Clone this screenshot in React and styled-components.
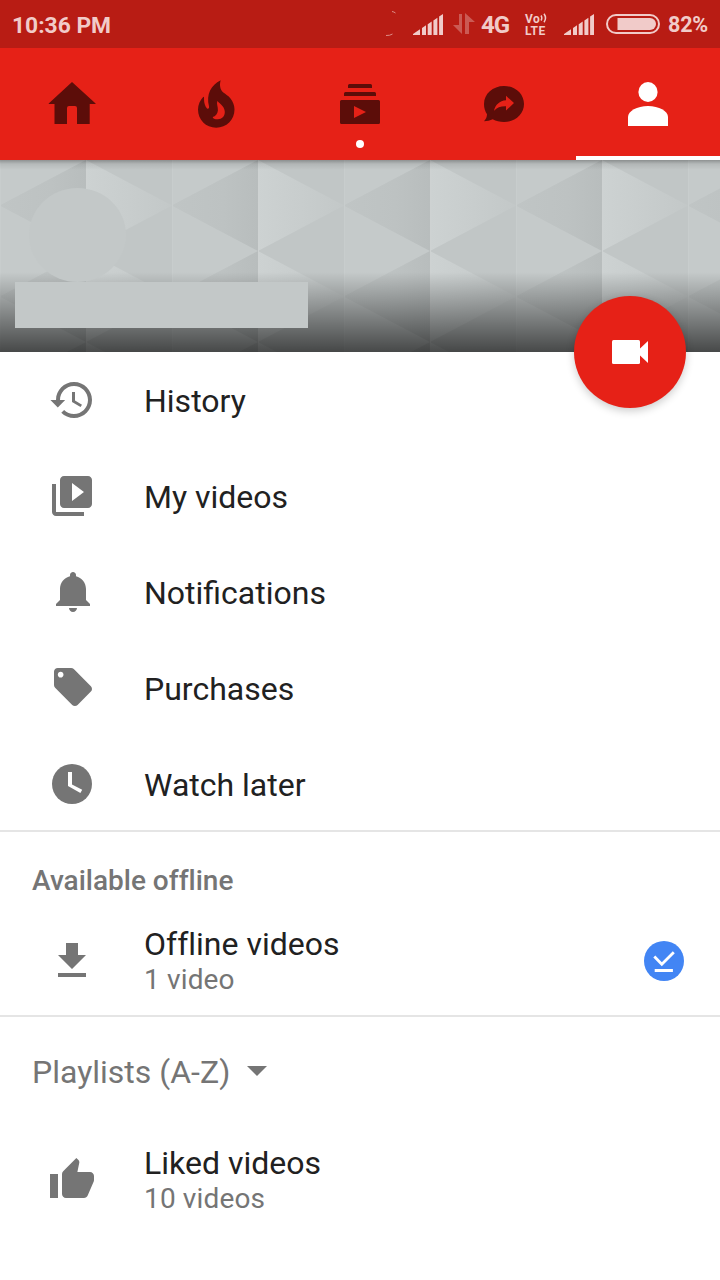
import styled, { createGlobalStyle } from 'styled-components';

const menu = [
  { title: 'History', icon: HistoryIcon },
  { title: 'My videos', icon: LibraryIcon },
  { title: 'Notifications', icon: BellIcon },
  { title: 'Purchases', icon: TagIcon },
  { title: 'Watch later', icon: ClockIcon },
];

const tabs = [
  { name: 'Home', icon: HomeIcon },
  { name: 'Trending', icon: FireIcon },
  { name: 'Subscriptions', icon: SubscriptionsIcon, badge: true },
  { name: 'Activity', icon: ShareIcon },
  { name: 'Account', icon: PersonIcon, active: true },
];

export default function App() {
  return (
    <Screen>
      <GlobalStyle />
      <StatusBar />
      <Tabs>
        {tabs.map(({ name, icon: Icon, badge, active }) => (
          <Tab key={name} $active={active} aria-label={name}>
            <Icon />
            {badge && <Dot />}
          </Tab>
        ))}
      </Tabs>
      <Banner>
        <BannerPattern />
        <Avatar />
        <ChannelName />
        <UploadButton aria-label="Upload">
          <CameraIcon />
        </UploadButton>
      </Banner>
      <Menu>
        {menu.map(({ title, icon: Icon }) => (
          <Row key={title}>
            <Icon />
            <Title>{title}</Title>
          </Row>
        ))}
      </Menu>
      <Offline>
        <SectionTitle>Available offline</SectionTitle>
        <Row>
          <DownloadIcon />
          <Info>
            <Title $plain>Offline videos</Title>
            <SubTitle>1 video</SubTitle>
          </Info>
          <DoneIcon />
        </Row>
      </Offline>
      <Playlists>
        <Sort>
          Playlists (A-Z)
          <svg width="20" height="12" viewBox="0 0 20 12">
            <path d="M0 0h20L10 10z" fill="#757575" />
          </svg>
        </Sort>
        <Row>
          <ThumbIcon />
          <Info>
            <Title>Liked videos</Title>
            <SubTitle>10 videos</SubTitle>
          </Info>
        </Row>
      </Playlists>
    </Screen>
  );
}

function StatusBar() {
  return (
    <Status>
      <Time>10:36 PM</Time>
      <StatusIcons>
        <svg width="12" height="28" viewBox="0 0 12 28" fill="none" stroke="#dd8d88" strokeWidth="1">
          <path d="M6 1.5q2 .3 3.500 1.500M0 25.500q4 .2 6.500-1.500" />
        </svg>
        <Signal $left={15} />
        <Arrows width="22" height="22" viewBox="0 0 22 22">
          <path d="M6 1h3v20L0 12h6zM12 0l10 9h-6v12h-4z" fill="#cb5a54" />
        </Arrows>
        <Network>4G</Network>
        <Volte>
          <VolteLine>
            Vo
            <svg width="7" height="10" viewBox="0 0 7 10" fill="none" stroke="#f1cbc9" strokeWidth="1.500">
              <path d="M1 2.500q1.600 2.500 0 5M4 .8q3 4.200 0 8.400" />
            </svg>
          </VolteLine>
          <VolteLine>LTE</VolteLine>
        </Volte>
        <Signal $left={15} />
        <Battery width="54" height="20" viewBox="0 0 54 20">
          <rect x="1" y="1" width="52" height="18" rx="9" fill="none" stroke="#f1cbc9" strokeWidth="2" />
          <path d="M11.500 4H44a6 6 0 0 1 0 12H11.500z" fill="#f1cbc9" />
        </Battery>
        <Percent>82%</Percent>
      </StatusIcons>
    </Status>
  );
}

function Signal({ $left }) {
  return (
    <SignalSvg $left={$left} width="31" height="21" viewBox="0 0 31 21">
      <path
        d="M0 21v-1l7-4.700V21zM9 14l4-2.700V21H9zM14.700 10.200l4-2.700V21h-4zM20.400 6.400l4-2.700V21h-4zM26.100 2.600L30 0v21h-3.900z"
        fill="#f1cbc9"
      />
    </SignalSvg>
  );
}

function BannerPattern() {
  return (
    <Pattern width="720" height="192" viewBox="0 0 720 192">
      <defs>
        <linearGradient id="dark">
          <stop offset="0" stopColor="#c0c5c5" />
          <stop offset=".6" stopColor="#bdc2c2" />
          <stop offset="1" stopColor="#b8bdbd" />
        </linearGradient>
        <linearGradient id="light">
          <stop offset="0" stopColor="#cdd2d2" />
          <stop offset=".6" stopColor="#c7cccc" />
          <stop offset="1" stopColor="#c3c8c8" />
        </linearGradient>
        <pattern id="facets" width="172" height="91" patternUnits="userSpaceOnUse">
          <rect width="172" height="91" fill="#c1c6c6" />
          <path d="M0 0h86L0 45.500zM0 45.500L86 91H0z" fill="#c5caca" />
          <path d="M86 0v91L0 45.500z" fill="url(#dark)" />
          <path d="M86 0v91l86-45.500z" fill="url(#light)" />
          <path d="M.5 0v91" stroke="#c8cdcd" />
          <path d="M86.500 0v91" stroke="#ced2d2" />
        </pattern>
        <linearGradient id="shade" x2="0" y2="1">
          <stop offset="0" stopColor="#000" stopOpacity="0" />
          <stop offset="1" stopColor="#000" stopOpacity=".64" />
        </linearGradient>
        <linearGradient id="drop" x2="0" y2="1">
          <stop offset="0" stopColor="#000" stopOpacity=".28" />
          <stop offset=".4" stopColor="#000" stopOpacity=".08" />
          <stop offset="1" stopColor="#000" stopOpacity="0" />
        </linearGradient>
      </defs>
      <rect width="720" height="192" fill="url(#facets)" />
      <rect y="112" width="720" height="80" fill="url(#shade)" />
      <rect width="720" height="10" fill="url(#drop)" />
    </Pattern>
  );
}

function HomeIcon() {
  return (
    <TabIcon viewBox="0 0 48 48">
      <path d="M24 2L.7 23.500v.5h5.800v20H19V28q0-2 2-2h6q2 0 2 2v16h12.700V24h5.900v-.5z" />
    </TabIcon>
  );
}

function FireIcon() {
  return (
    <TabIcon viewBox="0 0 48 48">
      <path
        fillRule="evenodd"
        d="M28.700.3C27.500 4 27.600 9.500 31.300 12.500c2.500 2 5 3 7.200 6 2.500 3 4 7 4 11 0 10.500-8 18.200-18.300 18.200S6 40 6 29.500c0-5 2.200-9.500 5.400-12.800.8 0 .8 1 .6 2.300 0 4 1.200 7.500 3 9.600 1.500.7 2.400-.4 2-2.300C14 14.500 19 5 28.700.3zM25.300 21c-1 2.800.9 6 .6 9.500-.3 3.400-2.400 5.800-5.200 6.500 0 1.600 2.400 2.400 5.200 2.300 4-.2 6.900-3 6.900-7.300 0-4.500-3.200-7-7.500-11z"
      />
    </TabIcon>
  );
}

function SubscriptionsIcon() {
  return (
    <TabIcon viewBox="0 0 48 48">
      <path
        fillRule="evenodd"
        d="M12 8V5.500Q12 4 13.500 4h21Q36 4 36 5.500V8zM8 16v-2.500Q8 12 9.500 12h29q1.500 0 1.500 1.500V16zM5.500 20h37q1.500 0 1.500 1.500v21q0 1.500-1.500 1.500h-37Q4 44 4 42.500v-21Q4 20 5.500 20zM18 26v12l12-6z"
      />
    </TabIcon>
  );
}

function ShareIcon() {
  return (
    <TabIcon viewBox="0 0 48 48">
      <path
        fillRule="evenodd"
        d="M24 6c11.200 0 20 7.900 20 18s-8.800 18-20 18c-4.200 0-8-1-11.300-2.800-2.600 1.300-5.400 2-8.700 2 2-2 3-4.400 3-6.900C5.100 31.500 4 28 4 24 4 13.900 12.800 6 24 6zM26 15.700v4.500c-6.500.6-10.500 4.300-12 10.500 3-3.300 7-4.700 12-4.500v4.300l8-7.400z"
      />
    </TabIcon>
  );
}

function PersonIcon() {
  return (
    <TabIcon viewBox="0 0 48 48">
      <ellipse cx="24" cy="12" rx="9.600" ry="10" />
      <path d="M4 46v-9c0-6 9-11 20-11s20 5 20 11v9z" />
    </TabIcon>
  );
}

function CameraIcon() {
  return (
    <svg width="48" height="48" viewBox="0 0 48 48" fill="#fff">
      <rect x="6" y="12" width="28" height="24" rx="1.500" />
      <path d="M33 21.500l9-8.500v22l-9-8.500z" />
    </svg>
  );
}

function HistoryIcon() {
  return (
    <RowIcon viewBox="0 0 24 24">
      <path d="M13 3c-4.970 0-9 4.030-9 9H1.200l3.700 3.700L8.600 12H6c0-3.870 3.130-7 7-7s7 3.130 7 7-3.130 7-7 7c-1.930 0-3.680-.79-4.940-2.060l-1.420 1.420C8.270 19.990 10.510 21 13 21c4.970 0 9-4.030 9-9s-4.030-9-9-9zm-1 5v5l4.280 2.540.72-1.210-3.500-2.080V8H12z" />
    </RowIcon>
  );
}

function LibraryIcon() {
  return (
    <RowIcon viewBox="0 0 24 24">
      <path d="M4 6H2v14c0 1.100.9 2 2 2h14v-2H4V6zm16-4H8c-1.100 0-2 .9-2 2v12c0 1.100.9 2 2 2h12c1.100 0 2-.9 2-2V4c0-1.100-.9-2-2-2zm-8 12.500v-9l6 4.500-6 4.500z" />
    </RowIcon>
  );
}

function BellIcon() {
  return (
    <RowIcon viewBox="-1 0 24 24">
      <path d="M11.500 22c1.100 0 2-.9 2-2h-4c0 1.100.9 2 2 2zm6.500-6v-5.500c0-3.070-2.130-5.640-5-6.320V3.500c0-.83-.67-1.500-1.500-1.500S10 2.670 10 3.500v.68c-2.870.68-5 3.250-5 6.320V16l-2 2v1h17v-1l-2-2z" />
    </RowIcon>
  );
}

function TagIcon() {
  return (
    <RowIcon viewBox="0 0 24 24">
      <path
        transform="translate(1.1 .1) scale(.95)"
        d="M21.410 11.580l-9-9C12.050 2.220 11.550 2 11 2H4c-1.100 0-2 .9-2 2v7c0 .55.22 1.050.59 1.420l9 9c.36.36.86.58 1.410.58.55 0 1.050-.22 1.410-.59l7-7c.37-.36.59-.86.59-1.410 0-.55-.23-1.060-.59-1.420zM5.500 7C4.670 7 4 6.330 4 5.500S4.670 4 5.500 4 7 4.670 7 5.500 6.330 7 5.500 7z"
      />
    </RowIcon>
  );
}

function ClockIcon() {
  return (
    <RowIcon viewBox="0 0 24 24">
      <circle cx="12" cy="12" r="10" />
      <path d="M10 6h2v6.200l5.100 2.700-.9 1.600L10 13z" fill="#fff" />
    </RowIcon>
  );
}

function DownloadIcon() {
  return (
    <RowIcon viewBox="0 0 24 24">
      <path d="M19 9h-4V3H9v6H5l7 7 7-7zM5 18v2h14v-2H5z" />
    </RowIcon>
  );
}

function ThumbIcon() {
  return (
    <RowIcon viewBox="0 0 24 24">
      <path d="M1 21h4V9H1v12zm22-11c0-1.100-.9-2-2-2h-6.310l.95-4.570.03-.32c0-.41-.17-.79-.44-1.060L14.170 1 7.590 7.590C7.220 7.950 7 8.450 7 9v10c0 1.100.9 2 2 2h9c.83 0 1.540-.5 1.840-1.220l3.020-7.050c.09-.23.14-.47.14-.73v-2z" />
    </RowIcon>
  );
}

function DoneIcon() {
  return (
    <svg width="40" height="40" viewBox="0 0 40 40">
      <circle cx="20" cy="20" r="20" fill="#4285f4" />
      <path d="M10.300 15.500l7.500 7.700 12-12M10.700 29.500h18.200" fill="none" stroke="#fff" strokeWidth="2.800" />
    </svg>
  );
}

const GlobalStyle = createGlobalStyle`
  * {
    box-sizing: border-box;
  }

  body {
    margin: 0;
    background-color: #fff;
    font-family: Roboto, 'Liberation Sans', sans-serif;
  }

  svg {
    display: block;
    flex-shrink: 0;
  }
`;

const Screen = styled.div`
  width: 720px;
  height: 1280px;
  overflow: hidden;

  display: flex;
  flex-direction: column;
`;

const Status = styled.header`
  height: 48px;
  padding: 0 12px;
  background-color: #b81c14;
  color: #f1cbc9;

  display: flex;
  align-items: center;
  justify-content: space-between;
`;

const Time = styled.span`
  font-size: 22.8px;
  font-weight: 700;
  line-height: 46px;
  padding-top: 3px;
`;

const StatusIcons = styled.div`
  display: flex;
  align-items: center;
`;

const SignalSvg = styled.svg`
  margin: 1px 0 0 ${(props) => props.$left}px;
`;

const Arrows = styled.svg`
  margin-left: 9px;
`;

const Network = styled.span`
  width: 30px;
  margin-left: 6px;
  padding-top: 2px;
  font-size: 24px;
  font-weight: 700;
  letter-spacing: -1px;
`;

const Volte = styled.div`
  width: 24px;
  margin-left: 14px;
  padding-top: 1px;

  display: flex;
  flex-direction: column;
`;

const VolteLine = styled.span`
  height: 12px;
  font-size: 12px;
  font-weight: 700;
  line-height: 12px;
  letter-spacing: 0.4px;

  display: flex;
`;

const Battery = styled.svg`
  margin-left: 11px;
`;

const Percent = styled.span`
  width: 40px;
  margin-left: 8px;
  padding-top: 1px;
  font-size: 21.5px;
  font-weight: 700;
  letter-spacing: -0.2px;
`;

const Tabs = styled.nav`
  height: 112px;
  background-color: #e62117;

  display: flex;
`;

const Tab = styled.button`
  flex: 1;
  padding: 4px 0 0;
  border: none;
  border-bottom: 4px solid ${(props) => (props.$active ? '#fff' : 'transparent')};
  background: none;
  color: ${(props) => (props.$active ? '#fff' : '#5c0d09')};
  position: relative;

  display: flex;
  align-items: center;
  justify-content: center;
`;

const TabIcon = styled.svg`
  width: 48px;
  height: 48px;
  fill: currentColor;
`;

const Dot = styled.span`
  width: 8px;
  height: 8px;
  border-radius: 50%;
  background-color: #fff;

  position: absolute;
  top: 92px;
  left: 68px;
`;

const Banner = styled.section`
  height: 192px;
  padding: 28px 15px 24px;
  position: relative;

  display: flex;
  flex-direction: column;
  justify-content: space-between;
`;

const Pattern = styled.svg`
  position: absolute;
  top: 0;
  left: 0;
  z-index: -1;
`;

const Avatar = styled.div`
  width: 97px;
  height: 94px;
  margin-left: 14px;
  border-radius: 50%;
  background-color: #c3c8c8;
`;

const ChannelName = styled.div`
  width: 293px;
  height: 46px;
  background-color: #c3c8c8;
`;

const UploadButton = styled.button`
  width: 112px;
  height: 112px;
  padding: 0;
  border: none;
  border-radius: 50%;
  background-color: #e62117;
  box-shadow: 0 3px 8px rgba(0, 0, 0, 0.2);

  position: absolute;
  right: 34px;
  bottom: -56px;

  display: flex;
  align-items: center;
  justify-content: center;
`;

const Menu = styled.section`
  border-bottom: 2px solid #e5e5e5;
  height: 480px;
`;

const Row = styled.div`
  height: 96px;
  padding: 0 36px 0 48px;

  display: flex;
  align-items: center;
  gap: 48px;
`;

const RowIcon = styled.svg`
  width: 48px;
  height: 48px;
  fill: #757575;
`;

const Info = styled.div`
  flex: 1;
  padding-bottom: 4px;
`;

const Title = styled.h3`
  margin: 0;
  padding-top: 2px;
  font-size: 32px;
  font-weight: 400;
  font-variant-ligatures: ${(props) => (props.$plain ? 'none' : 'normal')};
  line-height: 38px;
  color: #212121;
`;

const SubTitle = styled.p`
  margin: 0;
  font-size: 28px;
  line-height: 33px;
  letter-spacing: 0.15px;
  color: #757575;
`;

const Offline = styled.section`
  height: 185px;
  border-bottom: 2px solid #e5e5e5;
`;

const SectionTitle = styled.h2`
  margin: 0;
  padding: 32px 32px 16px;
  font-size: 28px;
  font-weight: 500;
  font-variant-ligatures: none;
  line-height: 33px;
  color: #757575;
`;

const Playlists = styled.section`
  padding-top: 36px;
`;

const Sort = styled.div`
  height: 38px;
  margin-bottom: 41px;
  padding-left: 32px;
  font-size: 32px;
  line-height: 38px;
  color: #757575;

  display: flex;
  align-items: center;
  gap: 17px;
`;
